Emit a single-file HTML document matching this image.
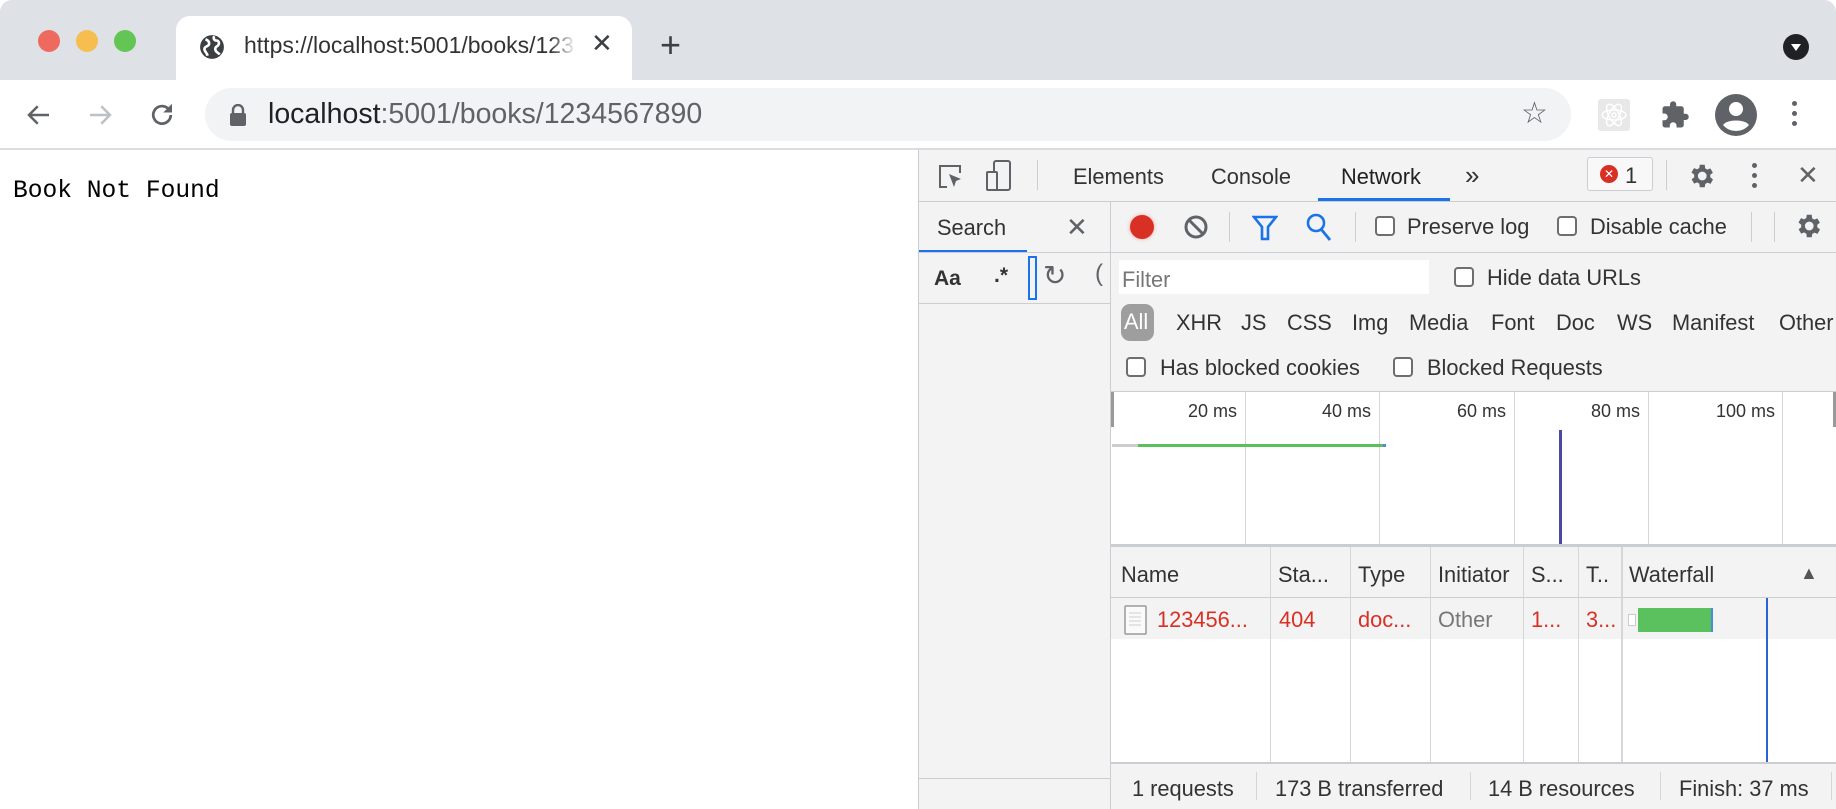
<!DOCTYPE html>
<html><head><meta charset="utf-8"><style>
*{box-sizing:border-box;margin:0;padding:0}
body{width:1836px;height:809px;overflow:hidden;background:#fff;font-family:"Liberation Sans",sans-serif;position:relative}
.a{position:absolute;white-space:nowrap}
.dt{font-size:21.8px;color:#333}
.cb{position:absolute;width:20px;height:20px;border:2px solid #6e6e6e;border-radius:4px;background:#fff}
.vl{position:absolute;width:1px;background:#d6d6d6}
.hl{position:absolute;height:1px;background:#cacdd1}
</style></head><body>
<div class="a" style="left:0;top:0;width:1836px;height:80px;background:#dee1e6;border-radius:12px 12px 0 0"></div>
<div class="a" style="left:38px;top:30px;width:22px;height:22px;border-radius:50%;background:#ee6a5f"></div>
<div class="a" style="left:76px;top:30px;width:22px;height:22px;border-radius:50%;background:#f5be4f"></div>
<div class="a" style="left:114px;top:30px;width:22px;height:22px;border-radius:50%;background:#62c554"></div>
<div class="a" style="left:176px;top:16px;width:456px;height:66px;background:#fff;border-radius:14px 14px 0 0"></div>
<svg class="a" style="left:199px;top:34px" width="26" height="26" viewBox="0 0 24 24"><circle cx="12" cy="12" r="11" fill="#3c4043"/><path d="M6 5c3 1 4 3 3 5s-4 1-4 4c0 2 2 3 3 6M14 2c-1 2 0 4 2 4s3 2 2 4-3 1-3 4 3 3 4 5" stroke="#fff" stroke-width="2.4" fill="none"/></svg>
<div class="a" style="left:244px;top:32px;font-size:23px;color:#333;width:330px;overflow:hidden">https://localhost:5001/books/1234567890</div>
<div class="a" style="left:550px;top:30px;width:26px;height:30px;background:linear-gradient(90deg,rgba(255,255,255,0),#fff)"></div>
<div class="a" style="left:591px;top:28px;font-size:26px;color:#3c4043">✕</div>
<div class="a" style="left:660px;top:24px;font-size:36px;color:#3c4043;font-weight:300">+</div>
<svg class="a" style="left:1783px;top:34px" width="26" height="26" viewBox="0 0 26 26"><circle cx="13" cy="13" r="13" fill="#202124"/><path d="M8 10h10l-5 7z" fill="#fff"/></svg>
<svg class="a" style="left:24px;top:100px" width="30" height="30" viewBox="0 0 24 24"><path d="M20 12H5M11 5l-7 7 7 7" stroke="#5f6368" stroke-width="2" fill="none"/></svg>
<svg class="a" style="left:85px;top:100px" width="30" height="30" viewBox="0 0 24 24"><path d="M4 12h15M13 5l7 7-7 7" stroke="#bdc1c6" stroke-width="2" fill="none"/></svg>
<svg class="a" style="left:147px;top:100px" width="30" height="30" viewBox="0 0 24 24"><path d="M19 12a7 7 0 1 1-2-5" stroke="#5f6368" stroke-width="2.2" fill="none"/><path d="M20 3v7h-7z" fill="#5f6368"/></svg>
<div class="a" style="left:205px;top:88px;width:1366px;height:53px;background:#f1f3f4;border-radius:27px"></div>
<svg class="a" style="left:229px;top:104px" width="18" height="22" viewBox="0 0 18 22"><path d="M4 9V6a5 5 0 0 1 10 0v3" stroke="#5f6368" stroke-width="2.4" fill="none"/><rect x="1" y="9" width="16" height="13" rx="2" fill="#5f6368"/></svg>
<div class="a" style="left:268px;top:98px;font-size:28.5px;color:#202124">localhost<span style="color:#5f6368">:5001/books/1234567890</span></div>
<div class="a" style="left:1521px;top:96px;font-size:30px;color:#5f6368">☆</div>
<div class="a" style="left:1598px;top:99px;width:32px;height:32px;background:#e8e8e8;border-radius:3px"></div>
<svg class="a" style="left:1598px;top:99px" width="32" height="32" viewBox="0 0 32 32"><g stroke="#fff" stroke-width="1.5" fill="none"><ellipse cx="16" cy="16" rx="12" ry="5"/><ellipse cx="16" cy="16" rx="12" ry="5" transform="rotate(60 16 16)"/><ellipse cx="16" cy="16" rx="12" ry="5" transform="rotate(-60 16 16)"/><circle cx="16" cy="16" r="2"/></g></svg>
<svg class="a" style="left:1660px;top:100px" width="30" height="30" viewBox="0 0 24 24"><path d="M20.5 11H19V7a2 2 0 0 0-2-2h-4V3.5a2.5 2.5 0 0 0-5 0V5H4a2 2 0 0 0-2 2v3.8h1.5a2.7 2.7 0 0 1 0 5.4H2V20a2 2 0 0 0 2 2h3.8v-1.5a2.7 2.7 0 0 1 5.4 0V22H17a2 2 0 0 0 2-2v-4h1.5a2.5 2.5 0 0 0 0-5z" fill="#5f6368"/></svg>
<svg class="a" style="left:1714px;top:93px" width="44" height="44" viewBox="0 0 44 44"><circle cx="22" cy="22" r="21" fill="#5f6368"/><circle cx="22" cy="16" r="7" fill="#fff"/><path d="M9 32c4-6 22-6 26 0a17 17 0 0 1-26 0z" fill="#fff"/></svg>
<div class="a" style="left:1792px;top:101px;width:5px;height:5px;border-radius:50%;background:#5f6368;box-shadow:0 10px 0 #5f6368,0 20px 0 #5f6368"></div>
<div class="hl" style="left:0;top:148px;width:1836px;height:2px;background:#dadce0"></div>
<div class="a" style="left:13px;top:178px;font-family:'Liberation Mono',monospace;font-size:24.6px;color:#000">Book Not Found</div>
<div class="a" style="left:918px;top:150px;width:918px;height:659px;background:#f3f3f3;border-left:1px solid #cacdd1"></div>
<div class="hl" style="left:918px;top:201px;width:918px"></div>
<svg class="a" style="left:937px;top:163px" width="28" height="28" viewBox="0 0 28 28"><path d="M10 24H3V3h20v7" stroke="#5f6368" stroke-width="2" fill="none"/><path d="M12 11l12 5-5 2-2 6z" fill="#5f6368"/></svg>
<svg class="a" style="left:984px;top:160px" width="30" height="32" viewBox="0 0 30 32"><rect x="10" y="1" width="16" height="29" rx="2" stroke="#5f6368" stroke-width="2" fill="none"/><rect x="3" y="12" width="10" height="18" rx="1" stroke="#5f6368" stroke-width="2" fill="#f3f3f3"/></svg>
<div class="vl" style="left:1037px;top:160px;height:30px;background:#cacdd1"></div>
<div class="a dt" style="left:1073px;top:164px">Elements</div>
<div class="a dt" style="left:1211px;top:164px">Console</div>
<div class="a dt" style="left:1341px;top:164px;color:#202124">Network</div>
<div class="a" style="left:1318px;top:198px;width:132px;height:3px;background:#1a73e8"></div>
<div class="a dt" style="left:1465px;top:160px;font-size:26px">»</div>
<div class="a" style="left:1587px;top:157px;width:66px;height:34px;border:1px solid #cacdd1;border-radius:3px;background:#f8f8f8"></div>
<div class="a" style="left:1600px;top:165px;width:18px;height:18px;border-radius:50%;background:#d93025;color:#fff;font-size:12px;text-align:center;line-height:18px">✕</div>
<div class="a dt" style="left:1625px;top:163px;font-size:22px">1</div>
<div class="vl" style="left:1666px;top:160px;height:30px;background:#cacdd1"></div>
<svg class="a" style="left:1686px;top:161px" width="30" height="30" viewBox="0 0 24 24"><path fill="#5f6368" d="M19.4 13a7.5 7.5 0 0 0 0-2l2.1-1.6-2-3.5-2.5 1a7 7 0 0 0-1.7-1L15 3h-4l-.4 2.7a7 7 0 0 0-1.700 1l-2.5-1-2 3.5L6.6 11a7.5 7.5 0 0 0 0 2l-2.1 1.6 2 3.5 2.5-1a7 7 0 0 0 1.7 1L11 21h4l.4-2.7a7 7 0 0 0 1.7-1l2.5 1 2-3.5zM13 15.5a3.5 3.5 0 1 1 0-7 3.5 3.5 0 0 1 0 7z"/></svg>
<div class="a" style="left:1752px;top:163px;width:5px;height:5px;border-radius:50%;background:#5f6368;box-shadow:0 10px 0 #5f6368,0 20px 0 #5f6368"></div>
<div class="a" style="left:1797px;top:160px;font-size:26px;color:#5f6368">✕</div>
<div class="vl" style="left:1110px;top:201px;height:608px;background:#cacdd1"></div>
<div class="a dt" style="left:937px;top:215px">Search</div>
<div class="a" style="left:1066px;top:212px;font-size:26px;color:#5f6368">✕</div>
<div class="a" style="left:919px;top:250px;width:108px;height:3px;background:#1a73e8"></div>
<div class="hl" style="left:918px;top:252px;width:918px"></div>
<div class="a" style="left:934px;top:267px;font-size:21px;font-weight:bold;color:#333">Aa</div>
<div class="a" style="left:994px;top:264px;font-size:21px;font-weight:bold;color:#333">.*</div>
<div class="a" style="left:1028px;top:256px;width:9px;height:44px;border:2px solid #1a73e8"></div>
<div class="a" style="left:1043px;top:259px;font-size:28px;color:#5f6368">↻</div>
<div class="a" style="left:1095px;top:260px;font-size:24px;color:#5f6368">(</div>
<div class="hl" style="left:918px;top:303px;width:192px"></div>
<div class="hl" style="left:918px;top:778px;width:192px"></div>
<div class="a" style="left:1130px;top:215px;width:24px;height:24px;border-radius:50%;background:#d93025;box-shadow:0 0 4px #f4a9a3"></div>
<svg class="a" style="left:1183px;top:214px" width="26" height="26" viewBox="0 0 26 26"><circle cx="13" cy="13" r="10" stroke="#5f6368" stroke-width="3" fill="none"/><path d="M6 6l14 14" stroke="#5f6368" stroke-width="3"/></svg>
<div class="vl" style="left:1229px;top:212px;height:30px;background:#cacdd1"></div>
<svg class="a" style="left:1252px;top:214px" width="26" height="28" viewBox="0 0 26 28"><path d="M2 3h22l-8 10v12h-6V13z" stroke="#1a73e8" stroke-width="2.6" fill="none"/></svg>
<svg class="a" style="left:1305px;top:212px" width="28" height="30" viewBox="0 0 28 30"><circle cx="11" cy="11" r="8" stroke="#1a73e8" stroke-width="2.6" fill="none"/><path d="M16 17l9 11" stroke="#1a73e8" stroke-width="2.8"/></svg>
<div class="vl" style="left:1355px;top:212px;height:30px;background:#cacdd1"></div>
<div class="cb" style="left:1375px;top:216px"></div>
<div class="a dt" style="left:1407px;top:214px">Preserve log</div>
<div class="cb" style="left:1557px;top:216px"></div>
<div class="a dt" style="left:1590px;top:214px">Disable cache</div>
<div class="vl" style="left:1751px;top:212px;height:30px;background:#cacdd1"></div>
<div class="vl" style="left:1774px;top:212px;height:30px;background:#cacdd1"></div>
<svg class="a" style="left:1793px;top:211px" width="30" height="30" viewBox="0 0 24 24"><path fill="#5f6368" d="M19.4 13a7.5 7.5 0 0 0 0-2l2.1-1.6-2-3.5-2.5 1a7 7 0 0 0-1.7-1L15 3h-4l-.4 2.7a7 7 0 0 0-1.7 1l-2.5-1-2 3.5L6.6 11a7.5 7.5 0 0 0 0 2l-2.1 1.6 2 3.5 2.5-1a7 7 0 0 0 1.7 1L11 21h4l.4-2.7a7 7 0 0 0 1.7-1l2.5 1 2-3.5zM13 15.5a3.5 3.5 0 1 1 0-7 3.5 3.5 0 0 1 0 7z"/></svg>
<div class="a" style="left:1119px;top:260px;width:310px;height:34px;background:#fff"></div>
<div class="a dt" style="left:1122px;top:267px;color:#777">Filter</div>
<div class="cb" style="left:1454px;top:267px"></div>
<div class="a dt" style="left:1487px;top:265px">Hide data URLs</div>
<div class="a" style="left:1121px;top:304px;width:33px;height:37px;background:#9e9e9e;border-radius:9px"></div>
<div class="a dt" style="left:1124px;top:309px;color:#fff">All</div>
<div class="a dt" style="left:1176px;top:310px">XHR</div>
<div class="a dt" style="left:1241px;top:310px">JS</div>
<div class="a dt" style="left:1287px;top:310px">CSS</div>
<div class="a dt" style="left:1352px;top:310px">Img</div>
<div class="a dt" style="left:1409px;top:310px">Media</div>
<div class="a dt" style="left:1491px;top:310px">Font</div>
<div class="a dt" style="left:1556px;top:310px">Doc</div>
<div class="a dt" style="left:1617px;top:310px">WS</div>
<div class="a dt" style="left:1672px;top:310px">Manifest</div>
<div class="a dt" style="left:1779px;top:310px">Other</div>
<div class="cb" style="left:1126px;top:357px"></div>
<div class="a dt" style="left:1160px;top:355px">Has blocked cookies</div>
<div class="cb" style="left:1393px;top:357px"></div>
<div class="a dt" style="left:1427px;top:355px">Blocked Requests</div>
<div class="a" style="left:1111px;top:391px;width:725px;height:154px;background:#fff;border-top:1px solid #cacdd1"></div>
<div class="a" style="left:1111px;top:392px;width:3px;height:35px;background:#999"></div>
<div class="vl" style="left:1245px;top:392px;height:153px"></div>
<div class="vl" style="left:1379px;top:392px;height:153px"></div>
<div class="vl" style="left:1514px;top:392px;height:153px"></div>
<div class="vl" style="left:1648px;top:392px;height:153px"></div>
<div class="vl" style="left:1782px;top:392px;height:153px"></div>
<div class="a" style="left:1833px;top:392px;width:3px;height:35px;background:#999"></div>
<div class="a" style="left:1188px;top:401px;font-size:18px;color:#333">20 ms</div>
<div class="a" style="left:1322px;top:401px;font-size:18px;color:#333">40 ms</div>
<div class="a" style="left:1457px;top:401px;font-size:18px;color:#333">60 ms</div>
<div class="a" style="left:1591px;top:401px;font-size:18px;color:#333">80 ms</div>
<div class="a" style="left:1716px;top:401px;font-size:18px;color:#333">100 ms</div>
<div class="a" style="left:1112px;top:444px;width:26px;height:3px;background:#ccc"></div>
<div class="a" style="left:1138px;top:444px;width:245px;height:3px;background:#5bbf5b"></div>
<div class="a" style="left:1383px;top:444px;width:3px;height:3px;background:#4a8bdc"></div>
<div class="a" style="left:1559px;top:430px;width:3px;height:115px;background:#4a4aa0"></div>
<div class="a" style="left:1111px;top:544px;width:725px;height:218px;background:#fff;border-top:3px solid #cacdd1"></div>
<div class="a" style="left:1111px;top:547px;width:725px;height:51px;background:#f3f3f3;border-bottom:1px solid #cacdd1"></div>
<div class="a" style="left:1111px;top:598px;width:725px;height:41px;background:#f3f3f3"></div>
<div class="vl" style="left:1270px;top:547px;height:215px"></div>
<div class="vl" style="left:1350px;top:547px;height:215px"></div>
<div class="vl" style="left:1430px;top:547px;height:215px"></div>
<div class="vl" style="left:1523px;top:547px;height:215px"></div>
<div class="vl" style="left:1578px;top:547px;height:215px"></div>
<div class="vl" style="left:1621px;top:547px;height:215px;width:2px"></div>
<div class="a dt" style="left:1121px;top:562px">Name</div>
<div class="a dt" style="left:1278px;top:562px">Sta...</div>
<div class="a dt" style="left:1358px;top:562px">Type</div>
<div class="a dt" style="left:1438px;top:562px">Initiator</div>
<div class="a dt" style="left:1531px;top:562px">S...</div>
<div class="a dt" style="left:1586px;top:562px">T..</div>
<div class="a dt" style="left:1629px;top:562px">Waterfall</div>
<div class="a" style="left:1800px;top:563px;font-size:18px;color:#555">▲</div>
<svg class="a" style="left:1124px;top:605px" width="24" height="30" viewBox="0 0 24 30"><rect x="1" y="1" width="21" height="28" rx="1" fill="#fafafa" stroke="#999" stroke-width="1.5"/><path d="M5 8h12M5 12h12M5 16h12M5 20h12" stroke="#ddd" stroke-width="1.5"/></svg>
<div class="a dt" style="left:1157px;top:607px;color:#d93025">123456...</div>
<div class="a dt" style="left:1279px;top:607px;color:#d93025">404</div>
<div class="a dt" style="left:1358px;top:607px;color:#d93025">doc...</div>
<div class="a dt" style="left:1438px;top:607px;color:#777">Other</div>
<div class="a dt" style="left:1531px;top:607px;color:#d93025">1...</div>
<div class="a dt" style="left:1586px;top:607px;color:#d93025">3...</div>
<div class="a" style="left:1628px;top:614px;width:8px;height:12px;border:1px solid #ccc;background:#fff"></div>
<div class="a" style="left:1638px;top:608px;width:75px;height:24px;background:#5bc15f;border-right:2px solid #4a8bdc"></div>
<div class="a" style="left:1766px;top:598px;width:2px;height:164px;background:#2a64d4"></div>
<div class="hl" style="left:1111px;top:762px;width:725px;height:2px"></div>
<div class="a dt" style="left:1132px;top:776px">1 requests</div>
<div class="vl" style="left:1256px;top:772px;height:28px"></div>
<div class="a dt" style="left:1275px;top:776px">173 B transferred</div>
<div class="vl" style="left:1470px;top:772px;height:28px"></div>
<div class="a dt" style="left:1488px;top:776px">14 B resources</div>
<div class="vl" style="left:1660px;top:772px;height:28px"></div>
<div class="a dt" style="left:1679px;top:776px">Finish: 37 ms</div>
<div class="vl" style="left:1831px;top:772px;height:28px"></div>
</body></html>
